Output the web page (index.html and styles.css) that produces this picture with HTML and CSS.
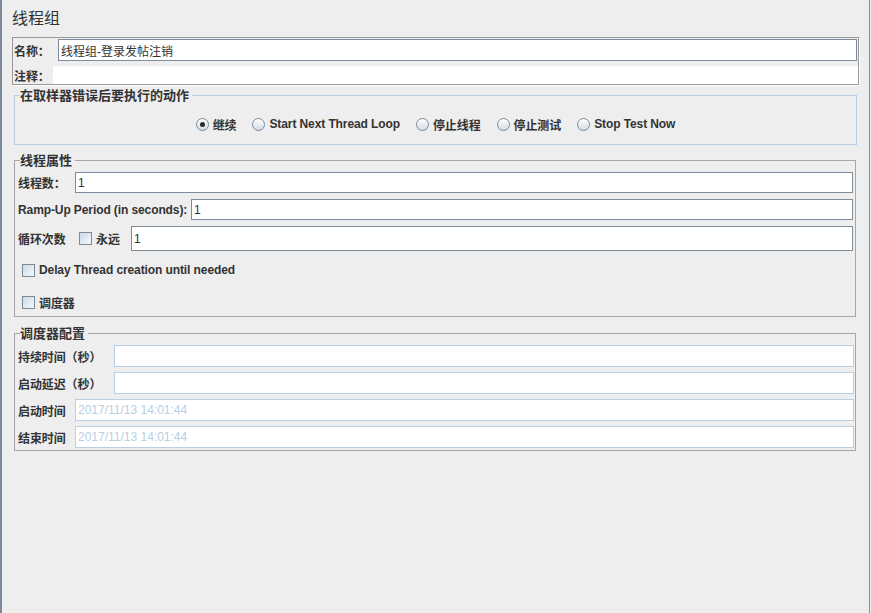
FILE: index.html
```html
<!DOCTYPE html>
<html lang="zh">

<head>
  <meta charset="UTF-8">
  <meta name="viewport" content="width=device-width, initial-scale=1.0">
  <title>线程组</title>
  <link rel="stylesheet" href="styles.css">
</head>

<body>
  <div class="panel">
    <h1 class="title">线程组</h1>

    <!-- 名称 / 注释 -->
    <div class="name-box">
      <div class="row name-row">
        <label class="lbl w44">名称：</label>
        <input class="field name-field" type="text" value="线程组-登录发帖注销">
      </div>
      <div class="row comment-row">
        <label class="lbl w39">注释：</label>
        <div class="comment-field"></div>
      </div>
    </div>

    <!-- 取样器错误后的动作 -->
    <fieldset class="group actions">
      <legend>在取样器错误后要执行的动作</legend>
      <div class="radios">
        <span class="opt"><span class="radio checked"></span>继续</span>
        <span class="opt"><span class="radio"></span>Start Next Thread Loop</span>
        <span class="opt"><span class="radio"></span>停止线程</span>
        <span class="opt"><span class="radio"></span>停止测试</span>
        <span class="opt"><span class="radio"></span>Stop Test Now</span>
      </div>
    </fieldset>

    <!-- 线程属性 -->
    <fieldset class="group props">
      <legend>线程属性</legend>
      <div class="row prow">
        <label class="lbl w57">线程数：</label>
        <input class="field" type="text" value="1">
      </div>
      <div class="row prow">
        <label class="lbl w173">Ramp-Up Period (in seconds):</label>
        <input class="field" type="text" value="1">
      </div>
      <div class="row prow loop">
        <label class="lbl w61">循环次数</label>
        <span class="check"></span>
        <span class="lbl forever">永远</span>
        <input class="field" type="text" value="1">
      </div>
      <div class="row crow delay">
        <span class="check"></span>
        <span class="lbl ctext">Delay Thread creation until needed</span>
      </div>
      <div class="row crow sched-check">
        <span class="check"></span>
        <span class="lbl ctext">调度器</span>
      </div>
    </fieldset>

    <!-- 调度器配置 -->
    <fieldset class="group sched">
      <legend>调度器配置</legend>
      <div class="row srow">
        <label class="lbl w96">持续时间（秒）</label>
        <input class="field light" type="text" value="">
      </div>
      <div class="row srow">
        <label class="lbl w96">启动延迟（秒）</label>
        <input class="field light" type="text" value="">
      </div>
      <div class="row srow">
        <label class="lbl w57">启动时间</label>
        <input class="field light" type="text" value="2017/11/13 14:01:44">
      </div>
      <div class="row srow">
        <label class="lbl w57">结束时间</label>
        <input class="field light" type="text" value="2017/11/13 14:01:44">
      </div>
    </fieldset>
  </div>
</body>

</html>
```

FILE: styles.css
```css
* {
  box-sizing: border-box;
}

body {
  margin: 0;
  background: #eeeeee;
  font-family: "Liberation Sans", "Noto Sans CJK SC", sans-serif;
  font-size: 12px;
  color: #333333;
  text-spacing-trim: space-all;
}

.panel {
  width: 870px;
  height: 613px;
  border-left: 2px solid #7d8b9c;
  border-right: 1px solid #8c8c8c;
  padding-left: 10px;
}

.title {
  margin: 0;
  height: 37px;
  padding-top: 8px;
  font-size: 16px;
  font-weight: normal;
  line-height: 22px;
}

.row {
  display: flex;
  align-items: center;
}

.lbl {
  flex: none;
  font-weight: bold;
  white-space: nowrap;
  letter-spacing: -0.1px;
}

.w39 { width: 39px; }
.w44 { width: 44px; }
.w57 { width: 57px; }
.w61 { width: 61px; }
.w96 { width: 96px; }
.w173 { width: 173px; }

/* 输入框 */
.field {
  flex: 1;
  min-width: 0;
  height: 21px;
  margin: 0;
  padding: 0 2px;
  border: 1px solid #7f8c99;
  background: #fff;
  font: inherit;
  color: #333333;
  outline: none;
}

.field.light {
  height: 22px;
  border-color: #b8cfe5;
  color: #b8cfe5;
}

/* 名称 / 注释 */
.name-box {
  width: 847px;
  height: 48px;
  border: 1px solid #999999;
  box-shadow: 1px 1px 0 #fff;
  padding: 1px 0 0 1px;
}

.name-row {
  height: 22px;
}

.name-field {
  height: 22px;
  margin-right: 1px;
}

.comment-row {
  height: 18px;
  margin-top: 5px;
}

.comment-field {
  flex: 1;
  height: 18px;
  background: #fff;
}

/* 分组框 */
.group {
  margin: 0 0 0 2px;
  min-width: 0;
  border: 1px solid #a6a6a6;
}

.group legend {
  margin-left: 2px;
  padding: 0 3px 0 0;
  font-size: 13px;
  line-height: 15px;
  font-weight: bold;
}

.actions {
  width: 843px;
  margin-top: 3px;
  padding: 13px 3px 12px;
  border-color: #b8cfe5;
}

.props {
  width: 842px;
  margin-top: 8px;
  padding: 4px 2px 4px 3px;
}

.sched {
  width: 842px;
  margin-top: 9px;
  padding: 4px 1px 2px 3px;
}

/* 单选 */
.radios {
  display: flex;
  justify-content: center;
  align-items: center;
  gap: 16px;
  height: 16px;
}

.opt {
  display: flex;
  align-items: center;
  gap: 4px;
  font-weight: bold;
  white-space: nowrap;
  letter-spacing: -0.1px;
}

.radio {
  display: flex;
  justify-content: center;
  align-items: center;
  width: 13px;
  height: 13px;
  border: 1px solid #7a8a99;
  border-radius: 50%;
  background: linear-gradient(#ffffff, #d2dbe5);
}

.radio.checked::after {
  content: "";
  width: 5px;
  height: 5px;
  border-radius: 50%;
  background: #2b2b2b;
}

/* 复选 */
.check {
  flex: none;
  width: 13px;
  height: 13px;
  border: 1px solid #7a8a99;
  background: linear-gradient(135deg, #cad7e5, #f7fafd);
}

.prow {
  margin-top: 6px;
}

.prow:first-of-type {
  margin-top: 0;
}

.loop .field {
  height: 25px;
}

.forever {
  width: 39px;
  padding-left: 4px;
}

.crow {
  height: 20px;
}

.crow .check {
  margin-left: 4px;
}

.ctext {
  margin-left: 4px;
}

.delay {
  margin-top: 9px;
}

.sched-check {
  margin-top: 12px;
}

.srow {
  margin-top: 5px;
}

.srow:first-of-type {
  margin-top: 0;
}
```
